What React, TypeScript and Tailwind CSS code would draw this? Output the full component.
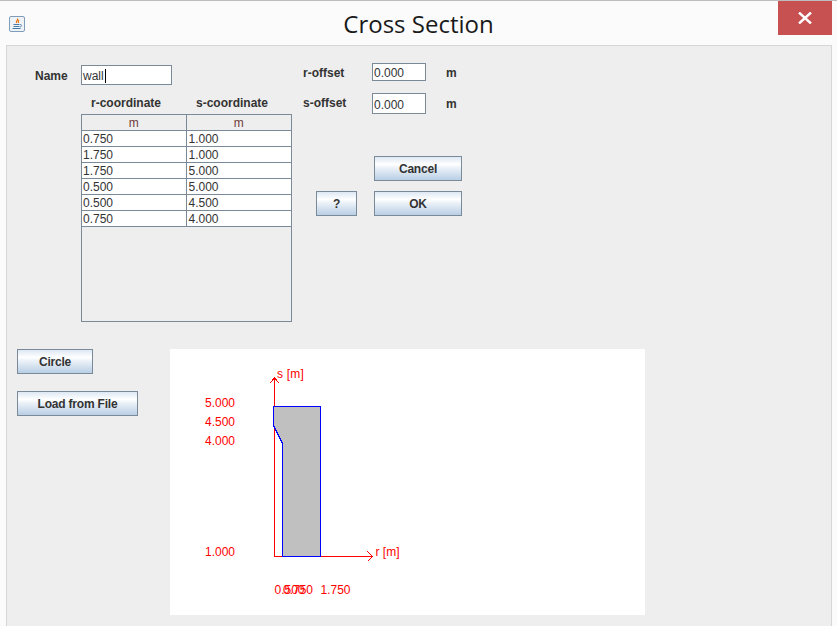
const rows = [
  ["0.750", "1.000"],
  ["1.750", "1.000"],
  ["1.750", "5.000"],
  ["0.500", "5.000"],
  ["0.500", "4.500"],
  ["0.750", "4.000"],
];

function JButton({ label, className }: { label: string; className: string }) {
  return (
    <button className={`h-[25px] border border-[#7a8a99] bg-[linear-gradient(180deg,#dde8f3_0%,#ffffff_32%,#eef3f9_45%,#b8cfe5_100%)] text-xs font-bold tracking-[-0.2px] text-[#333333] ${className}`}>
      {label}
    </button>
  );
}

function JavaIcon() {
  return (
    <svg width="16" height="16" viewBox="0 0 16 16" className="block">
      <rect x="0.5" y="0.5" width="15" height="15" rx="1.5" fill="#eef3f8" stroke="#7f9db9" />
      <path d="M8.5 2.5C9.5 4 6.5 5 7.5 7M10 4C9 5 9 6 9.5 7" fill="none" stroke="#e76f00" strokeWidth="1.2" />
      <path d="M4.5 8.5h6M4.5 10.5h6M3.5 12.5h8M11 8.5c2 0 2 2 0 2.5" fill="none" stroke="#4a7ba7" strokeWidth="1" />
    </svg>
  );
}

function Chart() {
  return (
    <svg width="475" height="266" viewBox="0 0 475 266" className="block bg-white" fontFamily="'Liberation Sans', Arial, sans-serif" fontSize="12">
      <g shapeRendering="crispEdges">
        <path d="M104.5 29V207.5H202.5" stroke="#ff0000" fill="none" />
        <path d="M99.5 34.5L104.5 29L109.5 34.5M197.5 202.5L202.5 207.5L197.5 212.5" stroke="#ff0000" fill="none" />
        <polygon points="103.5,57.5 150.5,57.5 150.5,207.5 112.5,207.5 112.5,94.5 103.5,76.5" fill="#c0c0c0" stroke="#0000ff" />
      </g>
      <g fill="#ff0000">
        <text x="107" y="29" letterSpacing="0.2">s [m]</text>
        <text x="205.5" y="207">r [m]</text>
        <text x="35" y="58">5.000</text>
        <text x="35" y="77">4.500</text>
        <text x="35" y="96">4.000</text>
        <text x="35" y="207">1.000</text>
        <text x="104.5" y="245">0.500</text>
        <text x="113" y="245">0.750</text>
        <text x="150.5" y="245">1.750</text>
      </g>
    </svg>
  );
}

export default function App() {
  return (
    <div className="h-[626px] w-[837px] overflow-hidden bg-[#fbfbfb] font-['Liberation_Sans',Arial,sans-serif] text-xs text-[#333333]">
      <div className="relative flex h-[45px] items-start justify-center border-t border-[#bdbdbd]">
        <div className="absolute left-[9px] top-[15px]">
          <JavaIcon />
        </div>
        <h1 className="mt-[6px] font-['Open_Sans',sans-serif] text-[24px] leading-[34px] font-normal text-[#1a1a1a]">Cross Section</h1>
        <div className="absolute left-[778px] top-0 flex h-[34px] w-[54px] items-center justify-center bg-[#c75050]">
          <svg width="14" height="12" viewBox="0 0 14 12">
            <path d="M1 0.5L13 11.5M13 0.5L1 11.5" stroke="#ffffff" strokeWidth="2.4" fill="none" />
          </svg>
        </div>
      </div>

      <div className="ml-[6px] h-[600px] w-[826px] border border-[#d6d6d6] bg-[#eeeeee]">
        <div className="flex h-[303px] pl-[28px] pt-[17px]">
          <div className="w-[268px] pt-[2px]">
            <div className="flex h-[20px] items-center">
              <span className="mt-[1px] w-[46px] font-bold">Name</span>
              <div className="flex h-[20px] w-[91px] items-center border border-[#7a8a99] bg-white pl-[1px] pt-[1px] text-[#333333]">
                wall<span className="ml-[1px] h-[14px] w-[1px] bg-black" />
              </div>
            </div>
            <div className="ml-[46px] mt-[9px] flex h-[17px] items-center pl-[10px] font-bold">
              <span className="w-[105px]">r-coordinate</span>
              <span>s-coordinate</span>
            </div>
            <div className="ml-[46px] mt-[3px] h-[208px] w-[211px] border border-[#7a8a99] bg-[#eeeeee]">
              <table className="w-full table-fixed border-collapse">
                <thead>
                  <tr className="h-[15px] border-b border-[#7a8a99]">
                    <th className="w-[104px] border-r border-[#7a8a99] p-0 pt-[1px] text-center font-normal leading-[14px] text-[#6e3b3b]">m</th>
                    <th className="p-0 pt-[1px] text-center font-normal leading-[14px] text-[#6e3b3b]">m</th>
                  </tr>
                </thead>
                <tbody>
                  {rows.map((r, i) => (
                    <tr key={i} className="h-[16px] border-b border-[#7a8a99] bg-white">
                      <td className="border-r border-[#7a8a99] p-0 pl-[1px] pt-[1px] leading-[14px]">{r[0]}</td>
                      <td className="p-0 pl-[2px] pt-[1px] leading-[14px]">{r[1]}</td>
                    </tr>
                  ))}
                </tbody>
              </table>
            </div>
          </div>

          <div className="w-[170px]">
            <div className="flex h-[18px] items-center">
              <span className="mt-[2px] w-[69px] font-bold">r-offset</span>
              <div className="flex h-[18px] w-[54px] items-center border border-[#7a8a99] bg-white pl-[1px] pt-[2px]">0.000</div>
              <span className="ml-[20px] mt-[2px] font-bold">m</span>
            </div>
            <div className="mt-[12px] flex h-[21px] items-center">
              <span className="-mt-[2px] w-[69px] font-bold">s-offset</span>
              <div className="flex h-[21px] w-[54px] items-center border border-[#7a8a99] bg-white pl-[1px] pt-[2px]">0.000</div>
              <span className="ml-[20px] font-bold">m</span>
            </div>
            <div className="ml-[71px] mt-[42px]">
              <JButton label="Cancel" className="block w-[88px]" />
            </div>
            <div className="ml-[13px] mt-[10px] flex gap-[17px]">
              <JButton label="?" className="w-[41px]" />
              <JButton label="OK" className="w-[88px]" />
            </div>
          </div>
        </div>

        <div className="flex pl-[10px]">
          <div className="w-[153px]">
            <JButton label="Circle" className="block w-[76px]" />
            <JButton label="Load from File" className="mt-[17px] block w-[121px]" />
          </div>
          <Chart />
        </div>
      </div>
    </div>
  );
}
